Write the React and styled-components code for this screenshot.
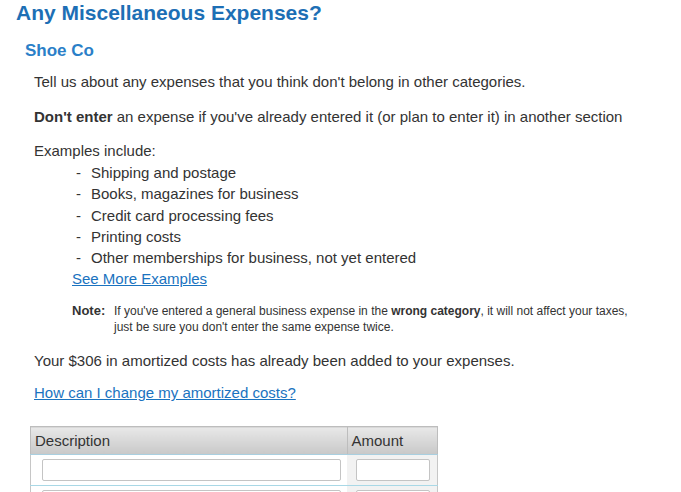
import React from "react";
import styled, { createGlobalStyle } from "styled-components";

const Global = createGlobalStyle`
  body {
    margin: 0;
    background: #fff;
    font-family: Arial, "Liberation Sans", sans-serif;
    color: #333;
  }
`;

const examples = [
  "Shipping and postage",
  "Books, magazines for business",
  "Credit card processing fees",
  "Printing costs",
  "Other memberships for business, not yet entered",
];

export default function App() {
  return (
    <Page>
      <Global />
      <Title>Any Miscellaneous Expenses?</Title>
      <Sub>Shoe Co</Sub>
      <Body>
        <Para $mb={15}>Tell us about any expenses that you think don't belong in other categories.</Para>
        <Para>
          <b>Don't enter</b> an expense if you've already entered it (or plan to enter it) in another section
        </Para>
        <Para $mb={0}>Examples include:</Para>
        <List>
          {examples.map((e) => (
            <Item key={e}>
              <Dash>-</Dash>
              {e}
            </Item>
          ))}
        </List>
        <MoreLink href="#">See More Examples</MoreLink>
        <Note>
          <NoteLabel>Note:</NoteLabel>
          <NoteText>
            If you've entered a general business expense in the <b>wrong category</b>, it will not affect your taxes,
            just be sure you don't enter the same expense twice.
          </NoteText>
        </Note>
        <Para $mb={12}>Your $306 in amortized costs has already been added to your expenses.</Para>
        <Link href="#">How can I change my amortized costs?</Link>
        <Table>
          <thead>
            <tr>
              <Th>Description</Th>
              <Th $w={88}>Amount</Th>
            </tr>
          </thead>
          <tbody>
            <Row>
              <Td>
                <Input $w={299} />
              </Td>
              <Td $alt>
                <Input $w={74} />
              </Td>
            </Row>
            <Row>
              <Td>
                <Input $w={299} />
              </Td>
              <Td $alt>
                <Input $w={74} />
              </Td>
            </Row>
          </tbody>
        </Table>
      </Body>
    </Page>
  );
}

const Page = styled.div`
  padding: 0 0 0 16px;
  height: 492px;
  overflow: hidden;
`;

const Title = styled.h1`
  margin: 0;
  padding-top: 1px;
  font-size: 21px;
  line-height: 24px;
  font-weight: bold;
  color: #1d6fb5;
`;

const Sub = styled.h2`
  margin: 16px 0 0 9px;
  font-size: 17px;
  line-height: 20px;
  font-weight: bold;
  color: #2b7fc8;
`;

const Body = styled.div`
  padding-left: 18px;
  margin-top: 11px;
  font-size: 15px;
  line-height: 20px;
`;

const Para = styled.p`
  margin: 0 0 ${(p) => (p.$mb ?? 14)}px;
`;

const List = styled.ul`
  list-style: none;
  margin: 1px 0 0;
  padding: 0 0 0 42px;
`;

const Item = styled.li`
  display: flex;
  line-height: 21.25px;
`;

const Dash = styled.span`
  width: 15px;
`;

const Link = styled.a`
  display: inline-block;
  color: #1a73c0;
  text-decoration: underline;
`;

const MoreLink = styled(Link)`
  margin: 0 0 0 38px;
  line-height: 21px;
`;

const Note = styled.div`
  display: flex;
  margin: 14px 0 16px 38px;
  font-size: 12px;
  line-height: 16px;
  width: 560px;
`;

const NoteLabel = styled.div`
  font-weight: bold;
  font-size: 13px;
  width: 42px;
  flex-shrink: 0;
`;

const NoteText = styled.div`
  color: #333;
`;

const Table = styled.table`
  margin: 23px 0 0 -4px;
  border-collapse: collapse;
  width: 408px;
  border: 1px solid #c6c6c6;
`;

const Th = styled.th`
  text-align: left;
  font-weight: normal;
  font-size: 15px;
  color: #333;
  height: 27px;
  padding: 0 4px;
  width: ${(p) => (p.$w ? `${p.$w}px` : "auto")};
  background: linear-gradient(#e8e8e8, #c8c8c8);
  border: 1px solid #bdbdbd;
  border-bottom: 1px solid #a9cfe0;
`;

const Row = styled.tr`
  border-top: 1px solid #a9d8e6;
  border-bottom: 1px solid #a9d8e6;
`;

const Td = styled.td`
  padding: 3px 6px 4px ${(p) => (p.$alt ? 9 : 11)}px;
  background: ${(p) => (p.$alt ? "#f2f2f2" : "#fff")};
  height: 23px;
`;

const Input = styled.input`
  display: block;
  box-sizing: border-box;
  width: ${(p) => p.$w}px;
  height: 22px;
  border: 1px solid #c4c4c4;
  border-radius: 2px;
  background: #fff;
`;
